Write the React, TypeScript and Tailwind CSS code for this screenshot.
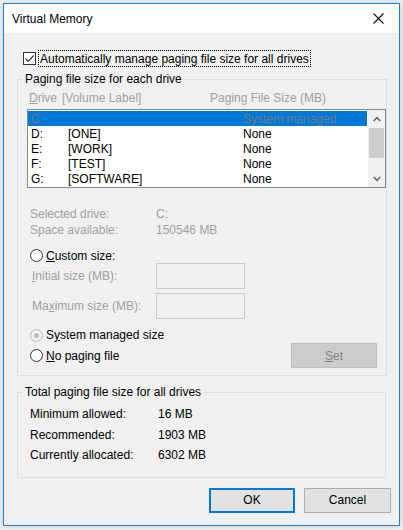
import React from "react";

function Radio({ checked = false, disabled = false }: { checked?: boolean; disabled?: boolean }) {
  return (
    <span
      className={
        "flex h-[13px] w-[13px] shrink-0 items-center justify-center rounded-full border " +
        (disabled ? "border-[#bcbcbc] bg-[#f0f0f0]" : "border-[#333333] bg-white")
      }
    >
      {checked && <span className="h-[5px] w-[5px] rounded-full bg-[#bcbcbc]" />}
    </span>
  );
}

const drives: [string, string, string][] = [
  ["C:", "", "System managed"],
  ["D:", "[ONE]", "None"],
  ["E:", "[WORK]", "None"],
  ["F:", "[TEST]", "None"],
  ["G:", "[SOFTWARE]", "None"],
];

export default function App() {
  return (
    <div className="h-[530px] w-[403px] overflow-hidden bg-[#efefef] pl-[3px] pt-[3px] font-['Liberation_Sans',Arial,sans-serif] text-[12px] leading-[14px] text-black">
      <div className="flex h-[523px] w-[397px] flex-col border border-[#1883d7] bg-[#f0f0f0] shadow-[0_0_6px_rgba(0,0,0,0.15)]">
        {/* Title bar */}
        <div className="flex h-[29px] shrink-0 items-center justify-between bg-white pl-[8px] pr-[15px]">
          <span>Virtual Memory</span>
          <svg width="11" height="11" viewBox="0 0 11 11" className="mb-[1px]">
            <path d="M0.5 0.5 L10.5 10.5 M10.5 0.5 L0.5 10.5" stroke="#111" strokeWidth="1.1" fill="none" />
          </svg>
        </div>

        {/* Body */}
        <div className="flex flex-1 flex-col">
          {/* Checkbox row */}
          <div className="ml-[19px] mt-[17px] flex h-[17px] items-center">
            <span className="flex h-[13px] w-[13px] items-center justify-center border border-[#333333] bg-white">
              <svg width="11" height="11" viewBox="0 0 11 11">
                <path d="M1.5 5.5 L4.3 8.3 L9.6 2.5" stroke="#333" strokeWidth="1.2" fill="none" />
              </svg>
            </span>
            <span className="ml-[2px] flex h-[17px] items-center border border-dotted border-black px-[1px]">
              <span>Automatically manage paging file size for all drives</span>
            </span>
          </div>

          {/* Group 1 */}
          <fieldset className="ml-[13px] mt-[5px] w-[369px] border border-[#dcdcdc] pb-[7px]">
            <legend className="ml-[5px] px-[2px] leading-[14px]">Paging file size for each drive</legend>
            <div className="ml-[11px] mt-[5px] flex text-[#a0a0a0]">
              <span className="w-[33px]">
                <u>D</u>rive
              </span>
              <span className="w-[148px]">[Volume Label]</span>
              <span>Paging File Size (MB)</span>
            </div>

            {/* Listbox */}
            <div className="ml-[9px] mt-[4px] flex h-[79px] w-[359px] border border-[#828790] bg-white">
              <div className="flex flex-1 flex-col pt-[1px]">
                {drives.map(([d, label, size], i) => (
                  <div
                    key={d}
                    className={
                      "mr-[1px] flex h-[15px] items-center pl-[3px] " +
                      (i === 0 ? "bg-[#0078d7] text-[#6d7888]" : "")
                    }
                  >
                    <span className="w-[37px]">{d}</span>
                    <span className="w-[175px]">{label}</span>
                    <span>{size}</span>
                  </div>
                ))}
              </div>
              <div className="flex w-[17px] flex-col bg-[#f0f0f0]">
                <div className="flex h-[17px] items-center justify-center">
                  <svg width="8" height="6" viewBox="0 0 8 6">
                    <path d="M0.7 5 L4 1.6 L7.3 5" stroke="#606060" strokeWidth="1.5" fill="none" />
                  </svg>
                </div>
                <div className="mx-[1px] mt-[1px] h-[30px] bg-[#cdcdcd]" />
                <div className="flex-1" />
                <div className="flex h-[17px] items-center justify-center">
                  <svg width="8" height="6" viewBox="0 0 8 6">
                    <path d="M0.7 1 L4 4.4 L7.3 1" stroke="#606060" strokeWidth="1.5" fill="none" />
                  </svg>
                </div>
              </div>
            </div>

            {/* Selected drive info */}
            <div className="ml-[12px] mt-[18px] flex h-[16px] items-center text-[#a0a0a0]">
              <span className="w-[126px]">Selected drive:</span>
              <span>C:</span>
            </div>
            <div className="ml-[12px] flex h-[16px] items-center text-[#a0a0a0]">
              <span className="w-[126px]">Space available:</span>
              <span>150546 MB</span>
            </div>

            {/* Custom size */}
            <div className="ml-[12px] mt-[10px] flex h-[15px] items-center gap-[3px]">
              <Radio />
              <span>
                <u>C</u>ustom size:
              </span>
            </div>
            <div className="ml-[14px] flex h-[26px] items-center">
              <span className="w-[124px] text-[#a0a0a0]">
                <u>I</u>nitial size (MB):
              </span>
              <div className="h-[26px] w-[89px] border border-[#cccccc] bg-[#f0f0f0]" />
            </div>
            <div className="ml-[14px] mt-[4px] flex h-[26px] items-center">
              <span className="w-[124px] text-[#a0a0a0]">
                Ma<u>x</u>imum size (MB):
              </span>
              <div className="h-[26px] w-[89px] border border-[#cccccc] bg-[#f0f0f0]" />
            </div>

            <div className="ml-[12px] mt-[8px] flex h-[16px] items-center gap-[3px]">
              <Radio checked disabled />
              <span>
                S<u>y</u>stem managed size
              </span>
            </div>
            <div className="ml-[12px] flex h-[25px] items-center justify-between pr-[9px]">
              <div className="flex items-center gap-[3px]">
                <Radio />
                <span>
                  <u>N</u>o paging file
                </span>
              </div>
              <div className="flex h-[25px] w-[86px] items-center justify-center border border-[#bfbfbf] bg-[#cccccc] text-[#838383]">
                <span>
                  <u>S</u>et
                </span>
              </div>
            </div>
          </fieldset>

          {/* Group 2 */}
          <fieldset className="ml-[13px] mt-[9px] w-[369px] border border-[#dcdcdc] pb-[11px]">
            <legend className="ml-[5px] px-[2px] leading-[14px]">Total paging file size for all drives</legend>
            <div className="ml-[12px] mt-[5px] flex h-[20.5px] items-center">
              <span className="w-[128px]">Minimum allowed:</span>
              <span>16 MB</span>
            </div>
            <div className="ml-[12px] flex h-[20.5px] items-center">
              <span className="w-[128px]">Recommended:</span>
              <span>1903 MB</span>
            </div>
            <div className="ml-[12px] flex h-[20.5px] items-center">
              <span className="w-[128px]">Currently allocated:</span>
              <span>6302 MB</span>
            </div>
          </fieldset>

          {/* Buttons */}
          <div className="mt-[10px] flex justify-end gap-[9px] pr-[8px]">
            <div className="flex h-[25px] w-[86px] items-center justify-center border-2 border-[#0078d7] bg-[#e1e1e1]">
              OK
            </div>
            <div className="flex h-[25px] w-[87px] items-center justify-center border border-[#adadad] bg-[#e1e1e1]">
              Cancel
            </div>
          </div>
        </div>
      </div>
    </div>
  );
}
